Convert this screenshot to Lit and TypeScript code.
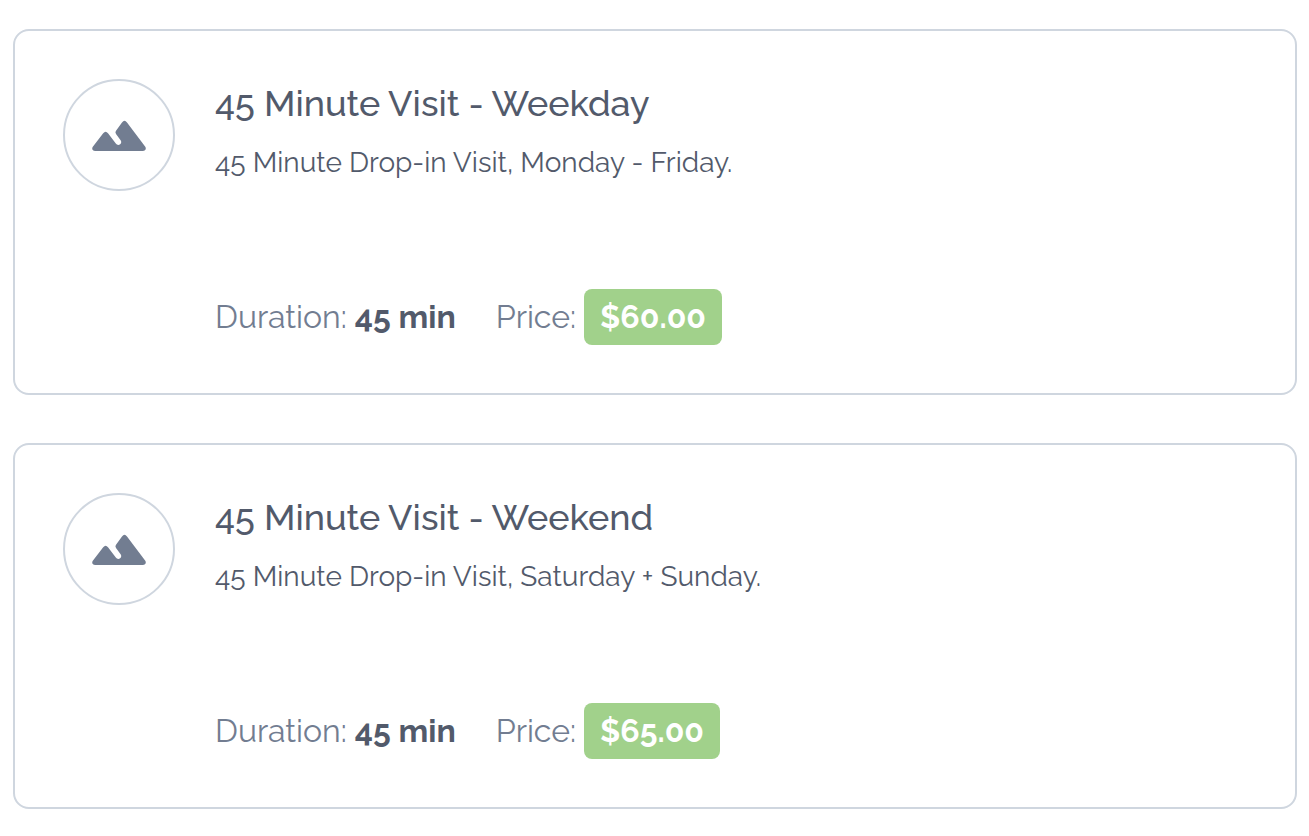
import { LitElement, html, css } from "lit";
import { customElement, property } from "lit/decorators.js";

interface Service {
  name: string;
  description: string;
  duration: string;
  price: string;
}

const services: Service[] = [
  {
    name: "45 Minute Visit - Weekday",
    description: "45 Minute Drop-in Visit, Monday - Friday.",
    duration: "45 min",
    price: "$60.00",
  },
  {
    name: "45 Minute Visit - Weekend",
    description: "45 Minute Drop-in Visit, Saturday + Sunday.",
    duration: "45 min",
    price: "$65.00",
  },
];

@customElement("service-card")
export class ServiceCard extends LitElement {
  @property({ attribute: false }) service!: Service;

  static styles = css`
    :host {
      display: block;
    }
    .card {
      display: flex;
      gap: 40px;
      padding: 48px;
      border: 2px solid #cfd6df;
      border-radius: 16px;
      background: #fff;
    }
    .avatar {
      box-sizing: border-box;
      flex: none;
      display: flex;
      align-items: center;
      justify-content: center;
      width: 112px;
      height: 112px;
      border: 2px solid #cfd6df;
      border-radius: 50%;
    }
    .avatar svg {
      display: block;
      width: 56px;
      height: 32px;
      fill: #727d91;
    }
    .body {
      flex: 1;
      min-width: 0;
    }
    .name {
      margin: 0;
      font-size: 36px;
      line-height: 48px;
      font-weight: 500;
      color: #525a6b;
    }
    .description {
      margin: 16px 0 0;
      font-size: 28px;
      line-height: 40px;
      color: #525a6b;
    }
    .facts {
      display: flex;
      flex-wrap: wrap;
      align-items: center;
      gap: 40px;
      margin: 106px 0 0;
      font-size: 32px;
      line-height: 56px;
      color: #727d91;
    }
    .fact {
      display: flex;
      gap: 8px;
    }
    dt,
    dd {
      margin: 0;
    }
    dd {
      font-weight: 700;
      color: #525a6b;
    }
    .price {
      padding: 0 16px;
      border-radius: 8px;
      background: #a1d18b;
      color: #fff;
    }
  `;

  render() {
    const { name, description, duration, price } = this.service;
    return html`
      <article class="card">
        <div class="avatar">
          <svg viewBox="0 0 56 32" aria-hidden="true">
            <path d="M4 32 C1.4 32 .4 29.6 2 27.6 L12.2 14.2 Q14.6 11.2 17 14.2 L24.8 24.6 C25.8 26 27.8 26.3 29.1 25.3 C30.4 24.3 30.6 22.6 29.6 21.2 L25 15 Q23.8 13.3 25 11.8 L31 3.4 Q33.5 .2 36 3.4 L54.1 27.6 C55.6 29.7 54.6 32 52 32 Z" />
          </svg>
        </div>
        <div class="body">
          <h2 class="name">${name}</h2>
          <p class="description">${description}</p>
          <dl class="facts">
            <div class="fact"><dt>Duration:</dt><dd>${duration}</dd></div>
            <div class="fact"><dt>Price:</dt><dd class="price">${price}</dd></div>
          </dl>
        </div>
      </article>
    `;
  }
}

@customElement("app-root")
export class AppRoot extends LitElement {
  static styles = css`
    :host {
      display: block;
      font-family: Raleway, Lato, "Open Sans", sans-serif;
    }
    .list {
      display: grid;
      gap: 48px;
      padding: 29px 12px 27px 13px;
    }
  `;

  render() {
    return html`
      <main class="list">
        ${services.map((s) => html`<service-card .service=${s}></service-card>`)}
      </main>
    `;
  }
}
